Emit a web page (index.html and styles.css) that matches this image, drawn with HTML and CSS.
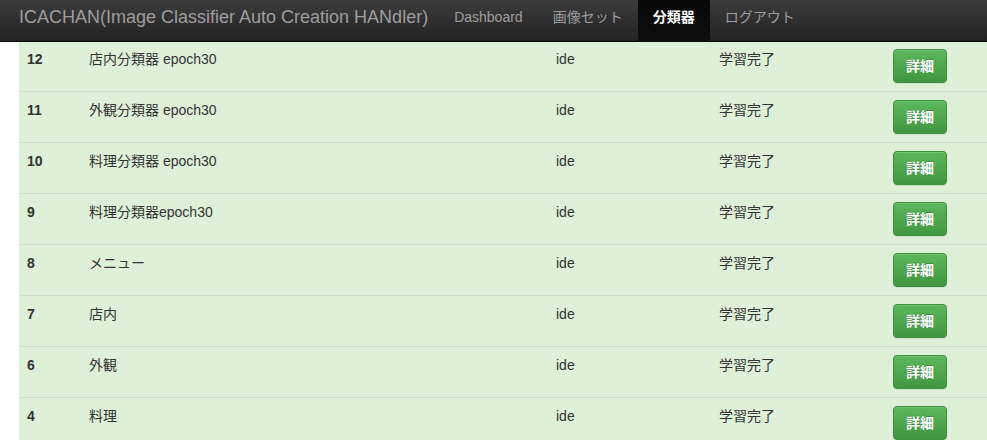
FILE: index.html
```html
<!DOCTYPE html>
<html lang="ja">
<head>
<meta charset="utf-8">
<title>ICACHAN</title>
<link rel="stylesheet" href="styles.css">
</head>
<body>
<nav class="navbar">
  <a class="brand">ICACHAN(Image Classifier Auto Creation HANdler)</a>
  <ul class="nav">
    <li><a>Dashboard</a></li>
    <li><a>画像セット</a></li>
    <li class="active"><a>分類器</a></li>
    <li><a>ログアウト</a></li>
  </ul>
</nav>
<main class="content">
  <table class="table">
    <colgroup>
      <col class="c-id"><col class="c-name"><col class="c-user"><col class="c-status"><col class="c-btn">
    </colgroup>
    <tbody>
      <tr><th>12</th><td>店内分類器 epoch30</td><td>ide</td><td>学習完了</td><td><a class="btn">詳細</a></td></tr>
      <tr><th>11</th><td>外観分類器 epoch30</td><td>ide</td><td>学習完了</td><td><a class="btn">詳細</a></td></tr>
      <tr><th>10</th><td>料理分類器 epoch30</td><td>ide</td><td>学習完了</td><td><a class="btn">詳細</a></td></tr>
      <tr><th>9</th><td>料理分類器epoch30</td><td>ide</td><td>学習完了</td><td><a class="btn">詳細</a></td></tr>
      <tr><th>8</th><td>メニュー</td><td>ide</td><td>学習完了</td><td><a class="btn">詳細</a></td></tr>
      <tr><th>7</th><td>店内</td><td>ide</td><td>学習完了</td><td><a class="btn">詳細</a></td></tr>
      <tr><th>6</th><td>外観</td><td>ide</td><td>学習完了</td><td><a class="btn">詳細</a></td></tr>
      <tr><th>4</th><td>料理</td><td>ide</td><td>学習完了</td><td><a class="btn">詳細</a></td></tr>
    </tbody>
  </table>
</main>
</body>
</html>
```
FILE: styles.css
```css
html, body {
  margin: 0;
  padding: 0;
  background: #fff;
  overflow: hidden;
}
body {
  font-family: "Liberation Sans", "Noto Sans CJK JP", sans-serif;
  font-size: 14px;
  line-height: 20px;
  color: #333;
}
.navbar {
  display: flex;
  height: 41px;
  border-bottom: 1px solid #080808;
  background: linear-gradient(to bottom, #3c3c3c 0%, #222 100%);
  padding-left: 19px;
}
.brand {
  font-size: 18px;
  line-height: 20px;
  padding-top: 7px;
  color: #9d9d9d;
  margin-right: 11px;
}
.nav {
  display: flex;
  list-style: none;
  margin: 0;
  padding: 0;
}
.nav li a {
  display: block;
  height: 41px;
  box-sizing: border-box;
  padding: 7px 15px 0;
  color: #9d9d9d;
}
.nav li.active a {
  color: #fff;
  font-weight: bold;
  background: linear-gradient(to bottom, #080808 0%, #0f0f0f 100%);
  height: 42px;
}
.content {
  padding-left: 19px;
}
.table {
  border-collapse: collapse;
  border-spacing: 0;
  table-layout: fixed;
  width: 980px;
  background: #dff0d8;
}
.c-id { width: 62px; }
.c-name { width: 467px; }
.c-user { width: 163px; }
.c-status { width: 174px; }
.c-btn { width: 114px; }
.table th, .table td {
  padding: 8px;
  vertical-align: top;
  text-align: left;
  border-top: 1px solid #d6dcd2;
}
.table th { font-weight: bold; }
.table tr:first-child th, .table tr:first-child td {
  border-top: none;
  padding-top: 7px;
}
.btn {
  display: inline-block;
  box-sizing: border-box;
  height: 34px;
  width: 54px;
  padding: 6px 0;
  text-align: center;
  color: #fff;
  font-weight: bold;
  border: 1px solid #3e8f3e;
  border-radius: 4px;
  background: linear-gradient(to bottom, #5cb85c 0%, #419641 100%);
  text-shadow: 0 -1px 0 rgba(0,0,0,0.2);
  box-shadow: inset 0 1px 0 rgba(255,255,255,0.15), 0 1px 1px rgba(0,0,0,0.075);
}
```
